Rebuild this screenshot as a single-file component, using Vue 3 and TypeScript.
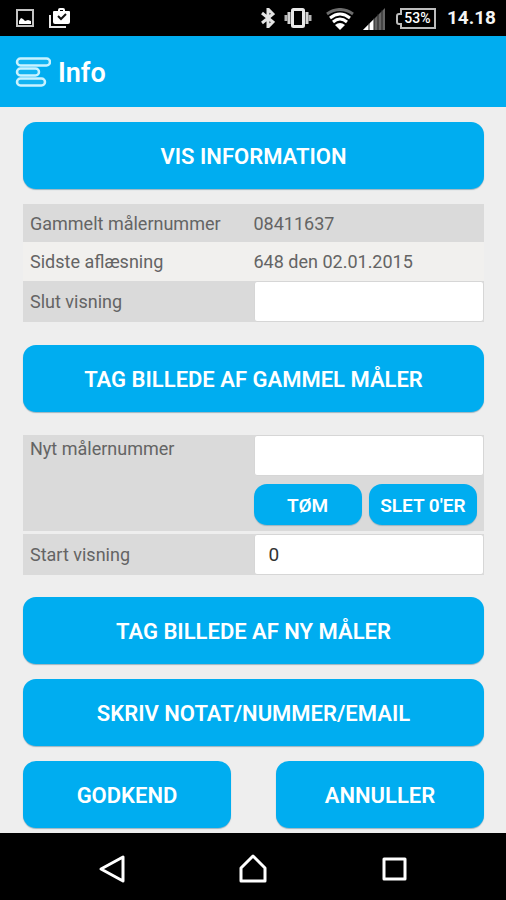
<script setup lang="ts">
import { ref } from 'vue'

const oldNumber = '08411637'
const lastReading = '648 den 02.01.2015'
const endReading = ref('')
const newNumber = ref('')
const startReading = ref('0')

function clearNumber(): void {
  newNumber.value = ''
}

function stripZeros(): void {
  newNumber.value = newNumber.value.replace(/^0+/, '')
}
</script>

<template>
  <div class="screen">
    <div class="status">
      <div class="status-group left">
        <svg width="18" height="18" viewBox="0 0 18 18" aria-hidden="true">
          <rect x="1" y="1" width="16" height="16" fill="none" stroke="#c4c4c4" stroke-width="2" />
          <path d="M3 15v-3l2-3 2 1 2 2 3-1 3 1v3z" fill="#fff" />
        </svg>
        <svg width="22" height="20" viewBox="0 0 22 20" aria-hidden="true">
          <path d="M1 7v12h16" fill="none" stroke="#e8e8e8" stroke-width="2" />
          <path d="M5 3h4V2q0-2 2-2h3q2 0 2 2v1h4q1 0 1 1v10q0 2-2 2H6q-2 0-2-2V4q0-1 1-1zm6 0h3V2h-3z" fill="#fff" fill-rule="evenodd" />
          <path d="M9 8l3 3 5-5" fill="none" stroke="#111" stroke-width="2" />
        </svg>
      </div>
      <div class="status-group right">
        <svg width="14" height="20" viewBox="0 0 14 20" aria-hidden="true">
          <path d="M1 5l11 9-5 5V1l5 5-11 9" fill="none" stroke="#e4e4e4" stroke-width="3" />
        </svg>
        <svg width="28" height="20" viewBox="0 0 28 20" aria-hidden="true">
          <rect x="8.5" y="1.5" width="11" height="17" rx="1" fill="none" stroke="#e8e8e8" stroke-width="3" />
          <path d="M5 4v12M23 4v12" stroke="#d4d4d4" stroke-width="3" />
          <path d="M2 7v6M26 7v6" stroke="#b4b4b4" stroke-width="3" />
        </svg>
        <svg class="wifi" width="28" height="22" viewBox="0 0 28 22" aria-hidden="true">
          <path d="M1 6Q14-3 27 6" fill="none" stroke="#6c6c6c" stroke-width="3" />
          <path d="M4 10Q14 2 24 10M7 14Q14 8 21 14" fill="none" stroke="#fff" stroke-width="3" />
          <path d="M9 17q5-4 10 0l-5 5z" fill="#fff" />
        </svg>
        <svg class="signal" width="22" height="22" viewBox="0 0 22 22" aria-hidden="true">
          <path d="M0 22L22 0v22z" fill="#666" />
          <path d="M0 22L11 11v11z" fill="#fff" />
          <path d="M6 15v7M11 10v12M15 6v16M19 2v20" stroke="#222" stroke-width="1" />
        </svg>
        <span class="battery">
          <svg width="40" height="21" viewBox="0 0 40 21" aria-hidden="true">
            <path d="M5 1h34v19H5v-4H3q-2 0-2-2V8q0-2 2-2h2z" fill="none" stroke="#bcbcbc" stroke-width="2" />
          </svg>
          <span class="percent">53%</span>
        </span>
        <span class="clock">14.18</span>
      </div>
    </div>

    <header class="bar">
      <svg width="36" height="32" viewBox="0 0 36 32" aria-hidden="true">
        <g fill="#12b4f2" stroke="#c9f2ff" stroke-width="2.5">
          <rect x="2" y="1.500" width="33" height="7" rx="3.500" />
          <rect x="2" y="11.500" width="22" height="7" rx="3.500" />
          <rect x="2" y="21.500" width="28" height="7" rx="3.500" />
        </g>
      </svg>
      <h1>Info</h1>
    </header>

    <main class="content">
      <button type="button" class="btn">VIS INFORMATION</button>

      <table class="readings">
        <tbody>
          <tr class="shade">
            <th scope="row">Gammelt målernummer</th>
            <td>{{ oldNumber }}</td>
          </tr>
          <tr class="light">
            <th scope="row">Sidste aflæsning</th>
            <td>{{ lastReading }}</td>
          </tr>
          <tr class="shade">
            <th scope="row"><label for="end-reading">Slut visning</label></th>
            <td><input id="end-reading" v-model="endReading" type="text" inputmode="numeric" /></td>
          </tr>
        </tbody>
      </table>

      <button type="button" class="btn">TAG BILLEDE AF GAMMEL MÅLER</button>

      <div class="new-meter">
        <div class="field tall">
          <label for="new-number">Nyt målernummer</label>
          <div class="entry">
            <input id="new-number" v-model="newNumber" type="text" />
            <div class="tools">
              <button type="button" class="btn small" @click="clearNumber">TØM</button>
              <button type="button" class="btn small" @click="stripZeros">SLET 0'ER</button>
            </div>
          </div>
        </div>
        <div class="field">
          <label for="start-reading">Start visning</label>
          <input id="start-reading" v-model="startReading" type="text" inputmode="numeric" />
        </div>
      </div>

      <div class="actions">
        <button type="button" class="btn">TAG BILLEDE AF NY MÅLER</button>
        <button type="button" class="btn">SKRIV NOTAT/NUMMER/EMAIL</button>
        <div class="pair">
          <button type="button" class="btn">GODKEND</button>
          <button type="button" class="btn">ANNULLER</button>
        </div>
      </div>
    </main>

    <nav class="system" aria-label="System">
      <button type="button" aria-label="Tilbage">
        <svg width="28" height="30" viewBox="0 0 28 30" aria-hidden="true">
          <path d="M25 3v24L3 15z" fill="none" stroke="#fff" stroke-width="3" stroke-linejoin="round" />
        </svg>
      </button>
      <button type="button" aria-label="Hjem">
        <svg width="30" height="30" viewBox="0 0 30 30" aria-hidden="true">
          <path d="M3 27V14L15 2l12 12v13z" fill="none" stroke="#fff" stroke-width="3" stroke-linejoin="round" />
        </svg>
      </button>
      <button type="button" aria-label="Seneste">
        <svg width="26" height="26" viewBox="0 0 26 26" aria-hidden="true">
          <rect x="3" y="3" width="21" height="20" fill="none" stroke="#fff" stroke-width="3" stroke-linejoin="round" />
        </svg>
      </button>
    </nav>
  </div>
</template>

<style>
body {
  margin: 0;
  background: #eee;
}
</style>

<style scoped>
.screen {
  display: flex;
  flex-direction: column;
  min-height: 100vh;
  background: #eee;
  color: #646464;
  font-family: Roboto, "Liberation Sans", sans-serif;
  font-size: 18px;
}

.screen *,
.screen {
  box-sizing: border-box;
}

svg {
  display: block;
  flex: none;
}

.status {
  display: flex;
  align-items: center;
  justify-content: space-between;
  height: 36px;
  padding: 0 10px 0 16px;
  background: #000;
}

.status-group {
  display: flex;
  align-items: center;
}

.left {
  gap: 15px;
}

.right {
  gap: 9px;
}

.wifi {
  margin: 2px 0 0 5px;
}

.signal {
  margin-top: 2px;
}

.battery {
  display: grid;
  align-items: center;
  margin: 0 2px;
}

.battery > * {
  grid-area: 1 / 1;
}

.percent {
  padding-left: 3px;
  color: #fff;
  font-size: 14px;
  font-weight: 500;
  line-height: 20px;
  text-align: center;
}

.clock {
  color: #f4f4f4;
  font-size: 19px;
  font-weight: 700;
  line-height: 36px;
}

.bar {
  display: flex;
  align-items: center;
  gap: 7px;
  height: 71px;
  padding: 2px 15px 0;
  background: #00adf0;
}

h1 {
  margin: 0;
  color: #fff;
  font-size: 27px;
  font-weight: 600;
  line-height: 36px;
}

.content {
  flex: 1;
  display: flex;
  flex-direction: column;
  padding: 15px 22px 5px 23px;
}

.btn {
  width: 100%;
  height: 67px;
  padding: 2px 0 0;
  border: 0;
  border-radius: 13px;
  background: #00adf0;
  box-shadow: 0 1px 1px #9bb4c0;
  color: #fff;
  font-family: inherit;
  font-size: 22px;
  font-weight: 600;
  line-height: 28px;
}

.btn.small {
  height: 41px;
  font-size: 19px;
}

.readings {
  width: 100%;
  margin: 15px 0 23px;
  border-collapse: collapse;
  table-layout: fixed;
}

.readings tr {
  height: 38px;
}

.readings .light {
  height: 39px;
}

.shade {
  background: #dadada;
}

.light {
  background: #f1f0ee;
}

th,
td {
  width: 50%;
  padding: 0;
  font-weight: 400;
  text-align: left;
}

th {
  padding-left: 7px;
}

input {
  display: block;
  width: 100%;
  height: 41px;
  padding: 0 14px;
  border: 1px solid #d6d6d6;
  border-radius: 3px;
  background: #fff;
  color: #333;
  font-family: inherit;
  font-size: 19px;
}

.new-meter {
  display: grid;
  gap: 3px;
  margin: 23px 0 22px;
}

.field {
  display: grid;
  grid-template-columns: 1fr 1fr;
  align-items: center;
  background: #dadada;
}

.field label {
  padding-left: 7px;
  line-height: 28px;
}

.tall {
  align-items: start;
  padding-bottom: 6px;
}

.entry {
  display: grid;
  gap: 8px;
}

.tools {
  display: grid;
  grid-template-columns: 1fr 1fr;
  gap: 7px;
  padding-right: 7px;
}

.actions {
  display: grid;
  gap: 15px;
}

.pair {
  display: grid;
  grid-template-columns: 1fr 1fr;
  gap: 45px;
}

.system {
  display: flex;
  align-items: center;
  justify-content: center;
  gap: 93px;
  height: 67px;
  padding-top: 4px;
  background: #000;
}

.system button {
  display: grid;
  place-items: center;
  width: 48px;
  height: 48px;
  padding: 0;
  border: 0;
  background: none;
}
</style>
